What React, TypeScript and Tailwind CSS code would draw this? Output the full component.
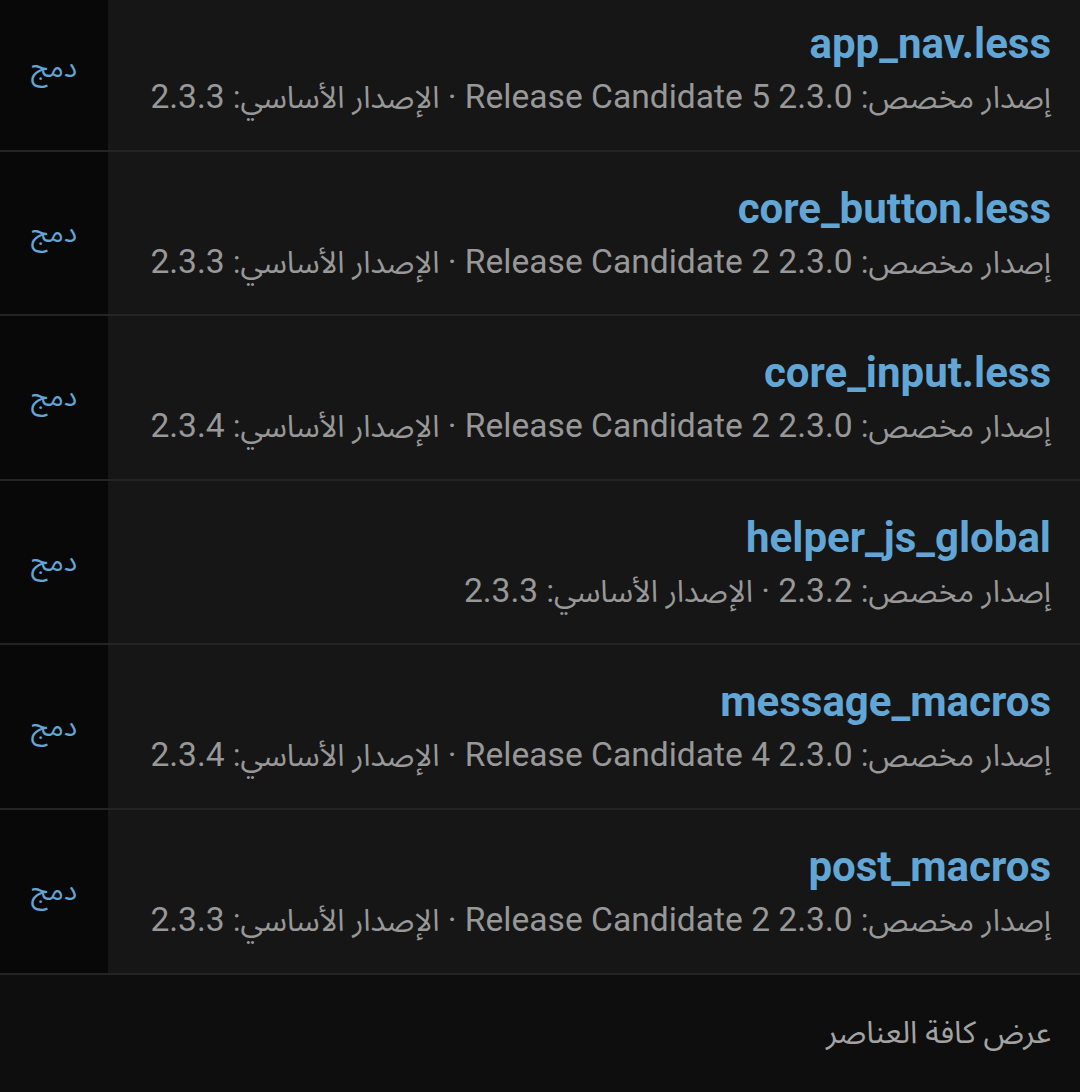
const ROWS = [
  { name: "app_nav.less", custom: "2.3.0 Release Candidate 5", base: "2.3.3" },
  { name: "core_button.less", custom: "2.3.0 Release Candidate 2", base: "2.3.3" },
  { name: "core_input.less", custom: "2.3.0 Release Candidate 2", base: "2.3.4" },
  { name: "helper_js_global", custom: "2.3.2", base: "2.3.3" },
  { name: "message_macros", custom: "2.3.0 Release Candidate 4", base: "2.3.4" },
  { name: "post_macros", custom: "2.3.0 Release Candidate 2", base: "2.3.3" },
];

const FONT = "font-['Roboto','Noto_Sans_Arabic','Noto_Naskh_Arabic','DejaVu_Sans',sans-serif]";

export default function App() {
  return (
    <div
      dir="rtl"
      className={`h-[1092px] w-[1080px] overflow-hidden bg-[#0e0e0e] ${FONT}`}
    >
      <div className="-mt-[13px]">
        {ROWS.map((r) => (
          <div key={r.name} className="flex h-[164.6px] border-b-2 border-[#242424]">
            <div className="flex-1 bg-[#161616] pr-[29px] pt-[30px]">
              <div className="text-[42px] font-bold leading-[54px] text-[#62a6d6]">{r.name}</div>
              <div className="text-[33.6px] leading-[52px] text-[#989898]">
                <span className="text-[30.5px]">إصدار مخصص:</span> {r.custom} ·{" "}
                <span className="text-[30.5px]">الإصدار الأساسي:</span> {r.base}
              </div>
            </div>
            <div className="flex w-[108px] items-center justify-center bg-[#080808]">
              <span className="text-[28px] text-[#62a6d6]">دمج</span>
            </div>
          </div>
        ))}
      </div>
      <div className="pr-[29px] pt-[36px] text-[31px] leading-[44px] text-[#a3a3a3]">
        عرض كافة العناصر
      </div>
    </div>
  );
}
